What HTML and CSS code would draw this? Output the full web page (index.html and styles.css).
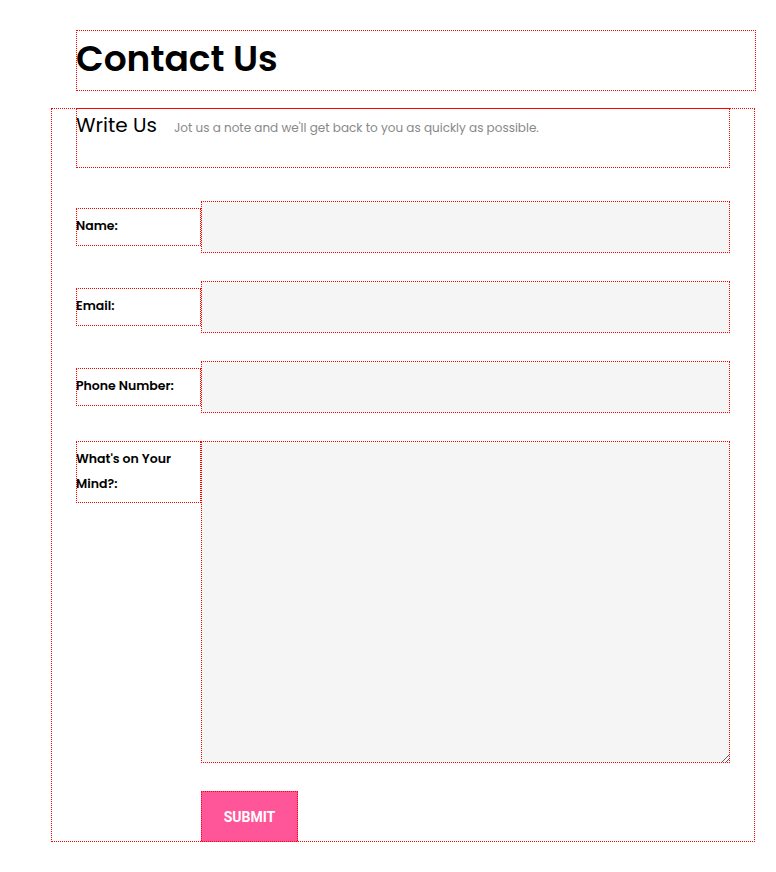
FILE: index.html
```html
<!DOCTYPE html>
<html lang="en">
<head>
    <meta charset="UTF-8">
    <meta name="viewport" content="width=device-width, initial-scale=1.0">
    <title>Contact Us</title>
    <link rel="stylesheet" href="styles.css">
</head>
<body>
    <div class="page-title">
        <h1>Contact Us</h1>
    </div>

    <div class="contact-container">
        <div class="write-us">
            <h2>Write Us</h2>
            <p>Jot us a note and we'll get back to you as quickly as possible.</p>
        </div>

        <form class="contact-form" onsubmit="return false;">
            <div class="form-row">
                <label for="name">Name:</label>
                <input type="text" id="name" />
            </div>
            <div class="form-row">
                <label for="email">Email:</label>
                <input type="email" id="email" />
            </div>
            <div class="form-row">
                <label for="phone">Phone Number:</label>
                <input type="tel" id="phone" />
            </div>
            <div class="form-row top">
                <label for="message">What's on Your Mind?:</label>
                <textarea id="message"></textarea>
            </div>
            <div class="form-row">
                <span class="spacer"></span>
                <button type="submit">SUBMIT</button>
            </div>
        </form>
    </div>
</body>
</html>
```

FILE: styles.css
```css
body {
    margin: 0;
    font-family: Poppins, "Open Sans", sans-serif;
    color: #000;
    background-color: #fff;
}
.page-title, .contact-container, .write-us, .contact-form label, .contact-form input, .contact-form textarea, .contact-form button {
    outline: 1px dotted red;
    outline-offset: -1px;
}
.page-title {
    margin: 30px 20px 0 76px;
    height: 61px;
}
.page-title h1 {
    margin: 0;
    font-size: 36px;
    font-weight: 600;
    line-height: 58px;
}
.contact-container {
    margin: 17px 21px 0 51px;
    padding: 0 25px;
    height: 734px;
}
.write-us {
    display: flex;
    align-items: baseline;
    height: 60px;
}
.write-us h2 {
    margin: 0;
    font-size: 20px;
    font-weight: 400;
    line-height: 34px;
}
.write-us p {
    margin: 0 0 0 17px;
    font-size: 12px;
    color: #888;
}
.contact-form {
    padding-top: 33px;
}
.form-row {
    display: flex;
    align-items: center;
    margin-bottom: 28px;
}
.form-row.top {
    align-items: flex-start;
}
.contact-form label, .spacer {
    width: 125px;
    flex-shrink: 0;
}
.contact-form label {
    padding: 5px 0 8px;
    font-size: 12.5px;
    font-weight: 600;
    line-height: 25px;
}
.form-row.top label {
    padding-bottom: 7px;
}
.contact-form input, .contact-form textarea {
    flex: 1;
    border: none;
    background-color: #f5f5f5;
    margin: 0;
    padding: 10px;
    font-family: inherit;
}
.contact-form input {
    height: 52px;
    box-sizing: border-box;
}
.contact-form textarea {
    height: 322px;
    box-sizing: border-box;
}
.contact-form button {
    width: 97px;
    height: 52px;
    border: none;
    background-color: #ff5599;
    color: #fff;
    font-family: Roboto, Arial, sans-serif;
    font-size: 14px;
    font-weight: 700;
    cursor: pointer;
}
```
